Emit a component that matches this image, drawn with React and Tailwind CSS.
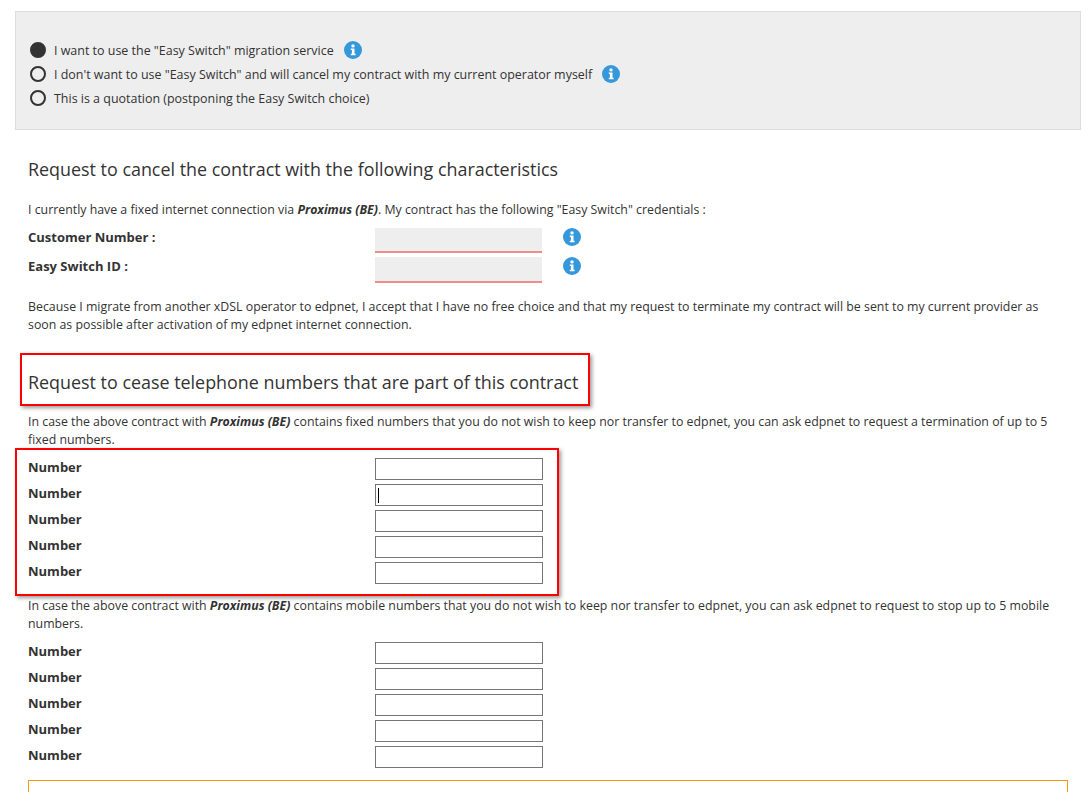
import React from "react";

const InfoIcon = ({ className = "" }) => (
  <svg viewBox="0 0 18 18" className={`w-[18px] h-[18px] shrink-0 ${className}`}>
    <circle cx="9" cy="9" r="9" fill="#3498db" />
    <circle cx="9" cy="4.9" r="1.7" fill="#fff" />
    <path d="M6.8 7.4h3.7v5.3h1.1v1.6H6.8v-1.6h1.1V9H6.8z" fill="#fff" />
  </svg>
);

const Radio = ({ checked, label, info }) => (
  <div className="flex items-center h-6">
    {checked ? (
      <span className="w-4 h-4 rounded-full bg-[#333] border-2 border-[#333] shrink-0" />
    ) : (
      <span className="w-4 h-4 rounded-full border-2 border-[#333] shrink-0" />
    )}
    <span className="ml-2 pt-[2px] text-[12.46px]">{label}</span>
    {info && <InfoIcon className="ml-[10px]" />}
  </div>
);

const NumberRow = ({ focused }) => (
  <div className="flex h-[26px]">
    <div className="w-[347px] font-bold text-[13px] leading-[18px]">Number</div>
    <div className="w-[168px] h-[22px] border border-[#767676] flex items-center px-[2px]">
      {focused && <span className="w-px h-[15px] bg-black" />}
    </div>
  </div>
);

const CredentialRow = ({ label, className, inputClass }) => (
  <div className={`flex items-start ${className}`}>
    <div className="w-[347px] font-bold text-[13px] leading-[18px]">{label}</div>
    <div className={`w-[167px] bg-[#eee] border-b-2 border-[#f28b8b] ${inputClass}`} />
    <InfoIcon className="ml-[21px]" />
  </div>
);

const Contract = () => <b className="italic">Proximus (BE)</b>;

export default function App() {
  return (
    <div
      className="relative h-[792px] overflow-hidden bg-white text-[#333] text-[12.35px] leading-[18px]"
      style={{ fontFamily: '"Open Sans", sans-serif' }}
    >
      <div className="pt-[11px] pl-[15px] pr-2">
        <div className="h-[119px] bg-[#eee] border border-[#ddd] pt-[26px] pl-[14px]">
          <Radio checked label={'I want to use the "Easy Switch" migration service'} info />
          <Radio label={'I don\'t want to use "Easy Switch" and will cancel my contract with my current operator myself'} info />
          <Radio label="This is a quotation (postponing the Easy Switch choice)" />
        </div>
      </div>

      <div className="pl-[28px] pr-[21px]">
        <h2 className="mt-[26px] text-[17.9px] leading-[27px]">
          Request to cancel the contract with the following characteristics
        </h2>
        <p className="mt-[18px]">
          I currently have a fixed internet connection via <Contract />. My contract has the following "Easy Switch" credentials :
        </p>
        <CredentialRow label="Customer Number :" className="mt-[9px]" inputClass="h-[25px]" />
        <CredentialRow label="Easy Switch ID :" className="mt-[4px]" inputClass="h-[26px]" />
        <p className="mt-[15px]">
          Because I migrate from another xDSL operator to edpnet, I accept that I have no free choice and that my request to terminate my contract will be sent to my current provider as soon as possible after activation of my edpnet internet connection.
        </p>

        <h2 className="mt-[35px] text-[17.9px] leading-[27px]">
          Request to cease telephone numbers that are part of this contract
        </h2>
        <p className="mt-[17px]">
          In case the above contract with <Contract /> contains fixed numbers that you do not wish to keep nor transfer to edpnet, you can ask edpnet to request a termination of up to 5 fixed numbers.
        </p>
        <div className="mt-[9px]">
          <NumberRow />
          <NumberRow focused />
          <NumberRow />
          <NumberRow />
          <NumberRow />
        </div>
        <p className="mt-[9px]">
          In case the above contract with <Contract /> contains mobile numbers that you do not wish to keep nor transfer to edpnet, you can ask edpnet to request to stop up to 5 mobile numbers.
        </p>
        <div className="mt-[9px]">
          <NumberRow />
          <NumberRow />
          <NumberRow />
          <NumberRow />
          <NumberRow />
        </div>
        <div className="mt-[8px] h-10 border border-[#f39c12]" />
      </div>

      {/* red annotation boxes drawn on top of the screenshot */}
      <div className="absolute left-[20px] top-[353px] w-[570px] h-[53px] border-2 border-[#f00] shadow-[2px_2px_4px_rgba(0,0,0,0.4)]" />
      <div className="absolute left-[15px] top-[448px] w-[544px] h-[148px] border-2 border-[#f00] shadow-[2px_2px_4px_rgba(0,0,0,0.4)]" />
    </div>
  );
}
